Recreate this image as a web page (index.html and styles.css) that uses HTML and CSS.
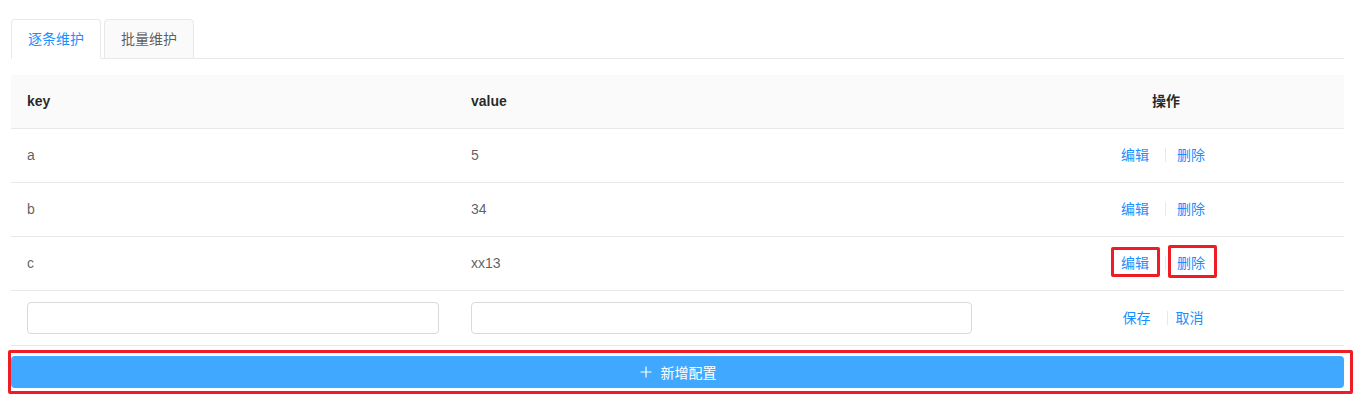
FILE: index.html
```html
<!DOCTYPE html>
<html lang="zh">
<head>
<meta charset="utf-8">
<link rel="stylesheet" href="styles.css">
</head>
<body>
<div class="page">
  <div class="tabs">
    <div class="tab active">逐条维护</div>
    <div class="tab">批量维护</div>
  </div>
  <table class="grid">
    <colgroup>
      <col class="c-key">
      <col class="c-val">
      <col class="c-op">
    </colgroup>
    <thead>
      <tr><th>key</th><th>value</th><th class="op">操作</th></tr>
    </thead>
    <tbody>
      <tr><td>a</td><td>5</td><td class="op"><span class="link l1">编辑</span><span class="divider"></span><span class="link l2">删除</span></td></tr>
      <tr><td>b</td><td>34</td><td class="op"><span class="link l1">编辑</span><span class="divider"></span><span class="link l2">删除</span></td></tr>
      <tr><td>c</td><td>xx13</td><td class="op"><span class="link l1 mark-a">编辑</span><span class="divider"></span><span class="link l2 mark-b">删除</span></td></tr>
      <tr class="edit-row">
        <td><input class="input" type="text"></td>
        <td><input class="input" type="text"></td>
        <td class="op"><span class="link s1">保存</span><span class="divider"></span><span class="link s2">取消</span></td>
      </tr>
    </tbody>
  </table>
  <div class="add-wrap">
    <button class="add-btn" type="button">
      <svg width="14" height="14" viewBox="0 0 14 14" aria-hidden="true"><path d="M7 1.5v11M1.5 7h11" stroke="#fff" stroke-width="1.2" fill="none"/></svg>
      <span>新增配置</span>
    </button>
  </div>
</div>
</body>
</html>
```

FILE: styles.css
```css
* { box-sizing: border-box; }
html, body { min-height: 414px; }
body {
  margin: 0;
  background: #fff;
  font-family: "Liberation Sans", "Noto Sans CJK SC", sans-serif;
  font-size: 14px;
  color: rgba(0, 0, 0, 0.65);
}
.page {
  width: 1333px;
  margin-left: 11px;
  padding-top: 19px;
  padding-bottom: 27px;
}
.tabs {
  display: flex;
  gap: 3px;
  border-bottom: 1px solid #e8e8e8;
  height: 40px;
  margin-bottom: 16px;
}
.tab {
  height: 40px;
  padding: 0 16px;
  display: flex;
  align-items: center;
  border: 1px solid #e8e8e8;
  border-radius: 4px 4px 0 0;
  background: #fafafa;
  color: rgba(0, 0, 0, 0.65);
  line-height: 38px;
}
.tab.active {
  background: #fff;
  color: #1890ff;
  height: 40px;
  border-bottom-color: #fff;
  margin-bottom: -1px;
}
.grid {
  width: 1333px;
  border-collapse: collapse;
  table-layout: fixed;
}
.c-key { width: 444px; }
.c-val { width: 533px; }
.c-op { width: 356px; }
.grid th, .grid td {
  padding: 16px;
  line-height: 21px;
  text-align: left;
  border-bottom: 1px solid #e8e8e8;
}
.grid th {
  background: #fafafa;
  color: rgba(0, 0, 0, 0.85);
  font-weight: 600;
}
.grid th.op, .grid td.op { text-align: center; }
.grid td.op { padding-right: 22px; }
.grid .edit-row td { padding-top: 11px; padding-bottom: 11px; }
.input {
  display: block;
  width: 100%;
  height: 32px;
  border: 1px solid #d9d9d9;
  border-radius: 4px;
  background: #fff;
  font: inherit;
  padding: 4px 11px;
}
.link {
  color: #1890ff;
  position: relative;
  display: inline-block;
}
.l1 { margin-right: 16px; }
.l2 { margin-left: 11px; }
.s1 { margin-right: 16px; }
.s2 { margin-left: 8px; }
.divider {
  display: inline-block;
  width: 1px;
  height: 14px;
  background: #e8e8e8;
  vertical-align: -2px;
}
.mark-a::after, .mark-b::after {
  content: "";
  position: absolute;
  border: 3px solid #ee1c24;
  border-radius: 2px;
}
.mark-a::after { left: -10px; top: -6px; right: -11px; bottom: -3px; }
.mark-b::after { left: -9px; top: -8px; right: -12px; bottom: -4px; }
.add-wrap {
  position: relative;
  margin-top: 10px;
}
.add-wrap::after {
  content: "";
  position: absolute;
  left: -3px;
  top: -6px;
  right: -9px;
  bottom: -6px;
  border: 3px solid #ee1c24;
  border-radius: 2px;
  pointer-events: none;
}
.add-btn {
  display: flex;
  align-items: center;
  justify-content: center;
  gap: 8px;
  width: 100%;
  height: 32px;
  border: 0;
  border-radius: 4px;
  background: #40a9ff;
  color: #fff;
  font: inherit;
  font-size: 14px;
  padding: 0;
}
```
